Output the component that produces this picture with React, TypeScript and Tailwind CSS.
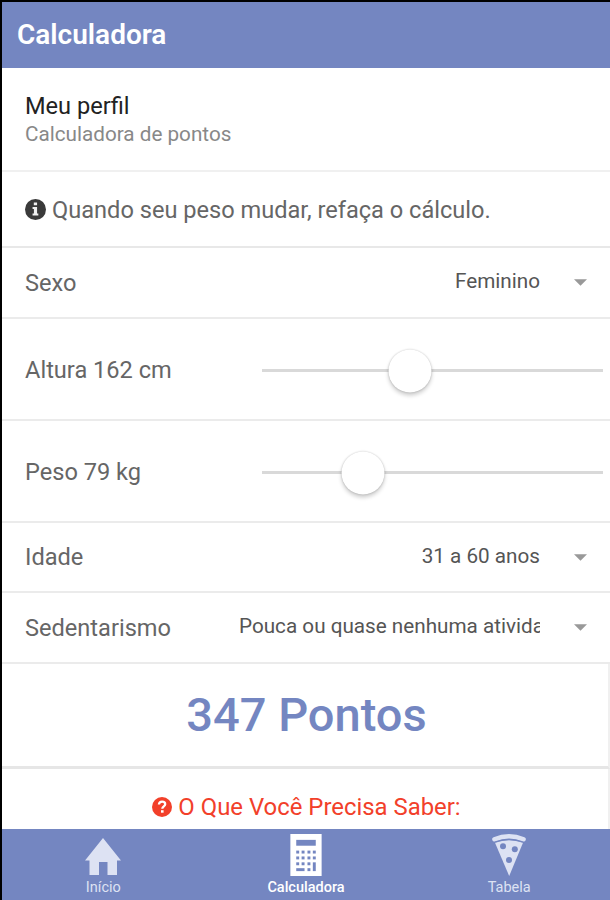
import { useState } from "react";

const profile = {
    sexo: "Feminino",
    idade: "31 a 60 anos",
    sedentarismo: "Pouca ou quase nenhuma atividade",
};

function InfoIcon() {
    return (
        <svg viewBox="0 0 20 20" className="w-[21px] h-[21px] shrink-0">
            <circle cx="10" cy="10" r="10" fill="#3a3a3a" />
            <path d="M8.4 3.3h3.1v2.6H8.4zM7.2 7.6h4.3v6.2h1.2v2H7.2v-2h1.3V9.5H7.2z" fill="#f0f0f0" />
        </svg>
    );
}

function HelpIcon() {
    return (
        <svg viewBox="0 0 20 20" className="w-5 h-5 shrink-0 -mt-[2px]">
            <circle cx="10" cy="10" r="10" fill="#f2402a" />
            <path
                d="M6.9 7.5C7.1 5.6 8.3 4.7 10.1 4.7c1.9 0 3.1 1 3.1 2.6 0 2.1-2.8 2.1-2.9 4.4"
                fill="none"
                stroke="#fff"
                strokeWidth="2.3"
            />
            <path d="M9 13.2h2.6v2.5H9z" fill="#fff" />
        </svg>
    );
}

function HomeIcon() {
    return (
        <svg viewBox="0 0 36 37" className="w-9 h-[37px]" fill="currentColor">
            <path d="M18 0 36 22.5h-4V37h-9.5V24h-8.5v13H4.5V22.5H0z" />
        </svg>
    );
}

function CalculatorIcon() {
    return (
        <svg viewBox="0 0 32 43" className="w-8 h-[42px]">
            <path d="M0 0h32v43H0z" fill="#fff" />
            <path d="M6 6h20v6H6z" fill="#7486c1" />
            <g fill="#7486c1">
                {[17, 23, 29].map((y) => (
                    <g key={y}>
                        <rect x="6" y={y} width="3" height="3" />
                        <rect x="11.5" y={y} width="3" height="3" />
                        <rect x="17.5" y={y} width="3" height="3" />
                        {y < 29 && <rect x="23" y={y} width="3" height="3" />}
                    </g>
                ))}
                <rect x="6" y="35" width="8.5" height="3" />
                <rect x="17.5" y="35" width="3" height="3" />
                <rect x="23" y="29" width="3" height="9" />
            </g>
        </svg>
    );
}

function PizzaIcon() {
    return (
        <svg viewBox="0 0 34 42" className="w-[34px] h-[42px]">
            <path d="M3 8.8Q17 3.5 31 8.8L17.2 42z" fill="currentColor" />
            <path d="M2.4 5.3Q17-0.8 31.6 5.3" fill="none" stroke="currentColor" strokeWidth="4.4" strokeLinecap="round" />
            <path d="M2.6 8.4Q17 2.6 31.4 8.4" fill="none" stroke="#7486c1" strokeWidth="0.6" />
            <g fill="#7486c1">
                <circle cx="11" cy="12.3" r="3" />
                <circle cx="22.8" cy="15.3" r="3" />
                <circle cx="17" cy="26" r="3" />
            </g>
        </svg>
    );
}

function SelectRow({ label, value, className }: { label: string; value: string; className: string }) {
    return (
        <div className={`flex items-center border-b-2 border-[#ebebeb] pl-[23px] pr-[23px] ${className}`}>
            <span className="pt-[2px] text-[23.6px] text-[#666]">{label}</span>
            <div className="ml-auto max-w-[301px] overflow-hidden whitespace-nowrap text-[20.7px] leading-6 text-[#555] pb-[3px]">
                {value}
            </div>
            <svg viewBox="0 0 14 7" className="w-[13px] h-[7px] ml-[34px] shrink-0" fill="#999">
                <path d="M0 0h14L7 7z" />
            </svg>
        </div>
    );
}

function SliderRow({ label, percent, onChange }: { label: string; percent: number; onChange: (v: number) => void }) {
    return (
        <div className="flex h-[102px] items-center border-b-2 border-[#ebebeb] pl-[23px] pr-[7px] pt-[3px]">
            <span className="w-[237px] text-[23.6px] text-[#666]">{label}</span>
            <div className="relative h-[3px] flex-1 bg-[#d9d9d9]" onClick={() => onChange(percent)}>
                <div
                    className="absolute top-1/2 size-[43px] -translate-x-1/2 -translate-y-1/2 rounded-full bg-white shadow-[0_3px_4px_rgba(0,0,0,0.2),0_0_2px_rgba(0,0,0,0.22)]"
                    style={{ left: `${percent}%` }}
                />
            </div>
        </div>
    );
}

export default function App() {
    const [altura, setAltura] = useState(43.4);
    const [peso, setPeso] = useState(29.5);

    return (
        <div className="flex h-[900px] w-[610px] flex-col overflow-hidden border-t-2 border-l-2 border-black bg-white font-['Roboto','Liberation_Sans',sans-serif]">
            <header className="flex h-[66px] shrink-0 items-center bg-[#7486c1] pl-[15px]">
                <h1 className="text-[28px] font-semibold leading-8 text-white">Calculadora</h1>
            </header>

            <main className="h-[761px] shrink-0 overflow-hidden">
                <div className="h-[104px] border-b-2 border-[#f0f0f0] pl-[23px] pt-[24px]">
                    <h2 className="text-[23.6px] leading-7 text-[#222]">Meu perfil</h2>
                    <p className="text-[20.7px] leading-7 text-[#888]">Calculadora de pontos</p>
                </div>
                <div className="flex h-[76px] items-center gap-[6px] border-b-2 border-[#e8e8e8] pl-[23px]">
                    <InfoIcon />
                    <span className="pt-[3px] text-[23.6px] text-[#666]">Quando seu peso mudar, refaça o cálculo.</span>
                </div>
                <SelectRow label="Sexo" value={profile.sexo} className="h-[71px]" />
                <SliderRow label="Altura 162 cm" percent={altura} onChange={setAltura} />
                <SliderRow label="Peso 79 kg" percent={peso} onChange={setPeso} />
                <SelectRow label="Idade" value={profile.idade} className="h-[70px]" />
                <SelectRow label="Sedentarismo" value={profile.sedentarismo} className="h-[71px]" />
                <div className="flex h-[105px] items-center justify-center border-b-3 border-r-2 border-b-[#e6e6e6] border-r-[#f0f0f0]">
                    <strong className="pl-[3px] text-[47px] font-medium text-[#7486c1]">347 Pontos</strong>
                </div>
                <div className="flex h-[78px] items-center justify-center gap-[6px] border-r-2 border-[#f0f0f0] pl-[3px]">
                    <HelpIcon />
                    <span className="text-[23.9px] text-[#f2402a]">O Que Você Precisa Saber:</span>
                </div>
            </main>

            <nav className="grid h-[71px] shrink-0 grid-cols-3 bg-[#7486c1] text-[14.5px] leading-4 text-[#dde2f3]">
                <a className="flex flex-col items-center justify-end pb-[4px]">
                    <HomeIcon />
                    <span className="mt-[5px]">Início</span>
                </a>
                <a className="flex flex-col items-center justify-end pb-[4px] font-medium text-white">
                    <CalculatorIcon />
                    <span className="mt-[4px]">Calculadora</span>
                </a>
                <a className="flex flex-col items-center justify-end pb-[4px]">
                    <PizzaIcon />
                    <span className="mt-[4px] pl-px">Tabela</span>
                </a>
            </nav>
        </div>
    );
}
